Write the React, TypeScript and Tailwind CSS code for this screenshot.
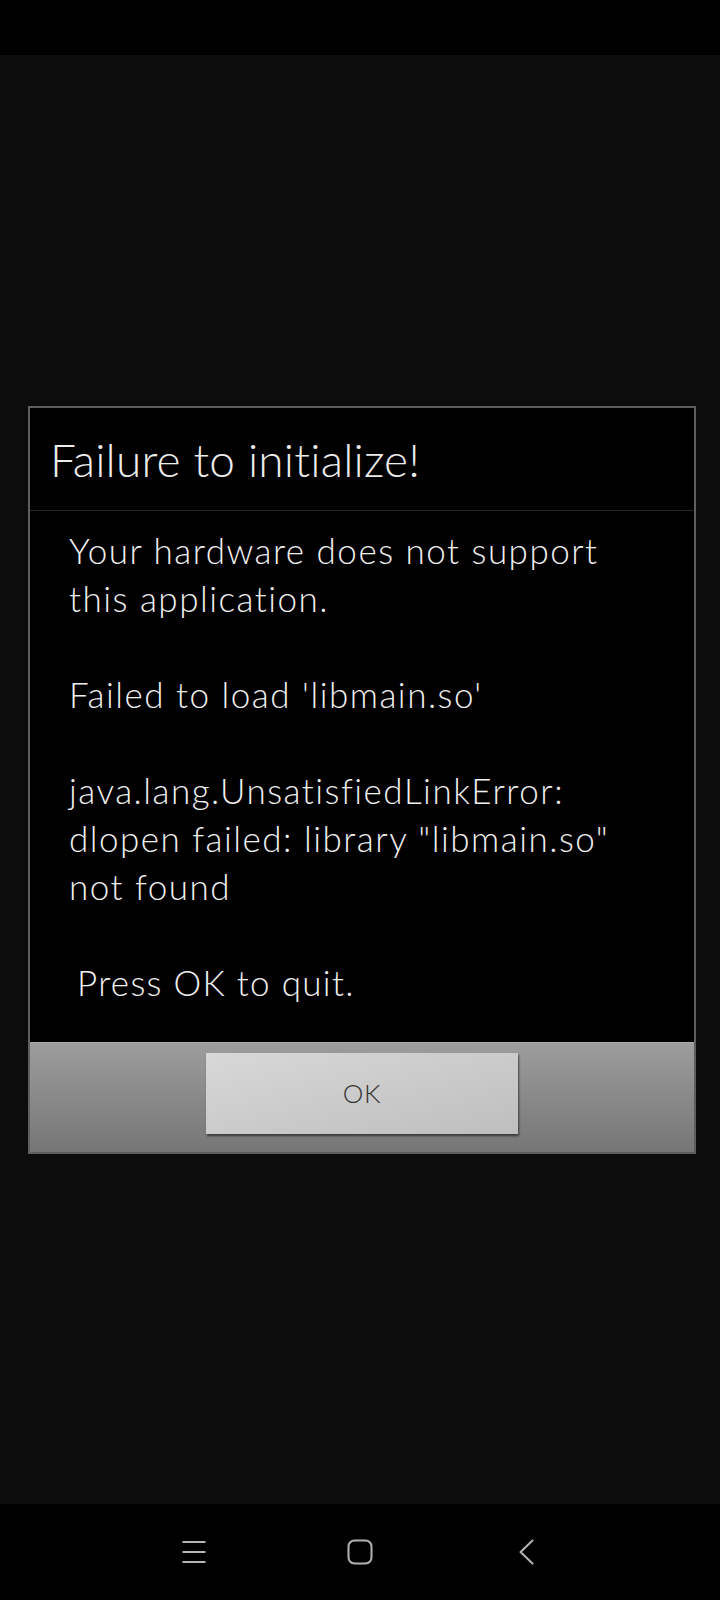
import React from 'react';

const BODY_LINES = [
  'Your hardware does not support',
  'this application.',
  '',
  "Failed to load 'libmain.so'",
  '',
  'java.lang.UnsatisfiedLinkError:',
  'dlopen failed: library "libmain.so"',
  'not found',
  '',
];

export default function App() {
  return (
    <div className="w-[720px] h-[1600px] flex flex-col bg-[#0d0c0d] font-['Lato',sans-serif] overflow-hidden">
      {/* Status bar */}
      <div className="h-[55px] shrink-0 bg-black" />

      {/* Content */}
      <div className="flex-1 pt-[351px] pl-[28px]">
        <div className="w-[668px] border-2 border-[#5e5e5e] bg-black flex flex-col">
          {/* Title */}
          <div className="h-[103px] flex items-center pl-[20px] pt-[2px] border-b border-[#262626]">
            <h1 className="text-[46px] font-light tracking-[0.2px] text-[#ececec] leading-none">Failure to initialize!</h1>
          </div>

          {/* Message */}
          <div className="pl-[39px] pr-[10px] pt-[15px] pb-[36px] text-[35px] font-light tracking-[1.5px] text-[#f0f0f0] leading-[48px]">
            {BODY_LINES.map((line, i) => (
              <p key={i} className="h-[48px] whitespace-pre">
                {line}
              </p>
            ))}
            <p className="h-[48px] pl-[8px] tracking-[1.3px]">Press OK to quit.</p>
          </div>

          {/* Button bar */}
          <div className="h-[110px] bg-gradient-to-b from-[#9d9d9d] to-[#767676] border-t border-[#a8a8a8] flex justify-center pt-[10px]">
            <button className="w-[312px] h-[81px] bg-gradient-to-br from-[#d8d8d8] to-[#bebebe] shadow-[1px_2px_2px_rgba(0,0,0,0.55)] text-[26px] font-light text-[#333] tracking-wide">
              OK
            </button>
          </div>
        </div>
      </div>

      {/* Nav bar */}
      <div className="h-[96px] shrink-0 bg-black flex items-center justify-center gap-[118px]">
        <div className="w-[48px] h-[48px] flex items-center justify-center">
          <svg width="24" height="22" viewBox="0 0 24 22" fill="none" stroke="#b4b4b4" strokeWidth="2">
            <path d="M0.5 1h23M0.5 11h23M0.5 21h23" />
          </svg>
        </div>
        <div className="w-[48px] h-[48px] flex items-center justify-center">
          <svg width="26" height="26" viewBox="0 0 26 26" fill="none" stroke="#b4b4b4" strokeWidth="2">
            <rect x="1.5" y="1.5" width="23" height="23" rx="6" />
          </svg>
        </div>
        <div className="w-[48px] h-[48px] flex items-center justify-center">
          <svg width="15" height="26" viewBox="0 0 15 26" fill="none" stroke="#b4b4b4" strokeWidth="2" strokeLinecap="round" strokeLinejoin="round">
            <path d="M13.5 1.5L1.5 13l12 11.5" />
          </svg>
        </div>
      </div>
    </div>
  );
}
